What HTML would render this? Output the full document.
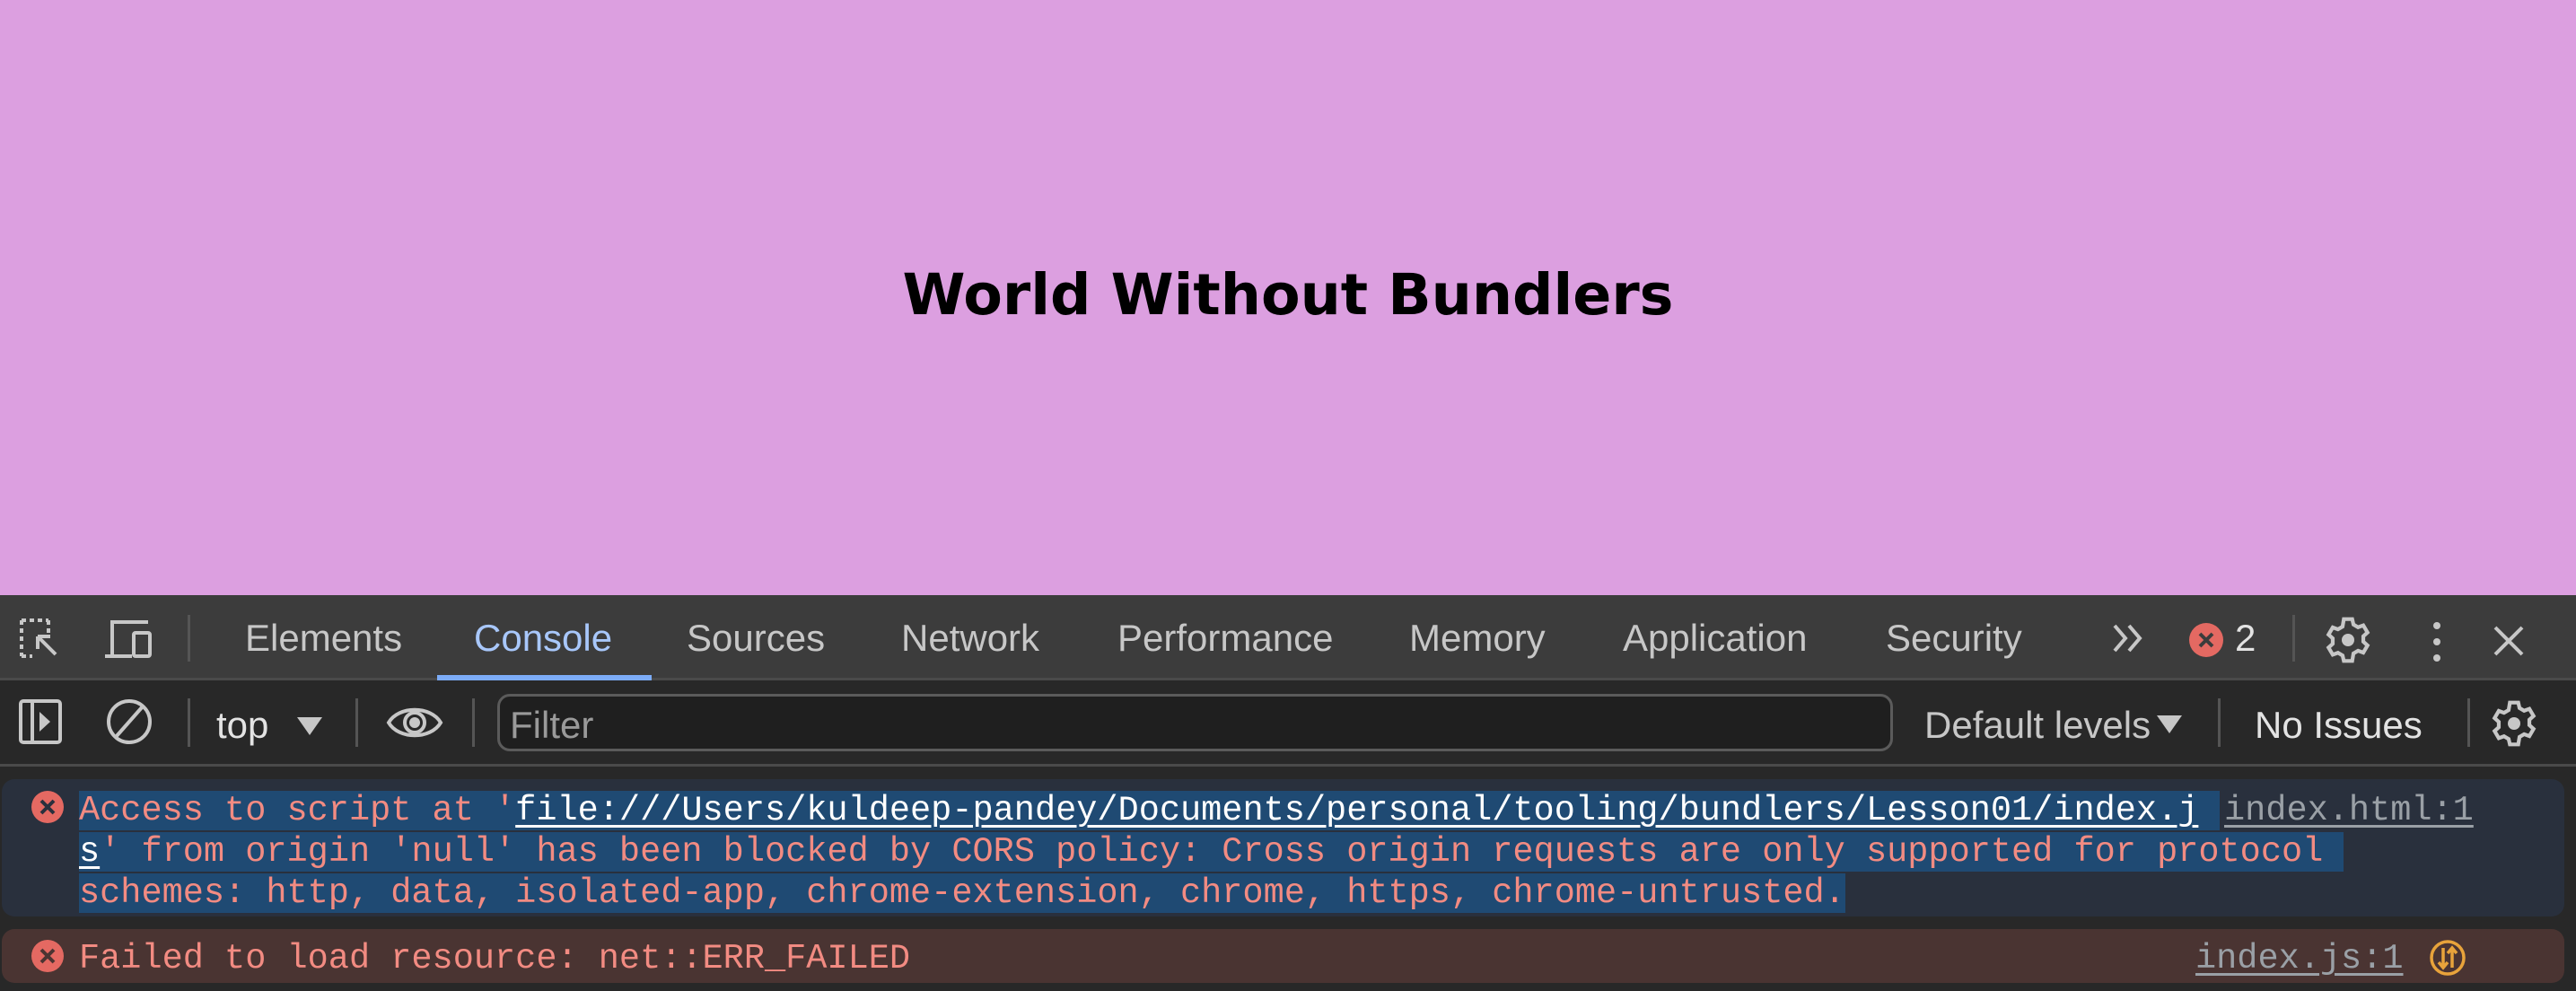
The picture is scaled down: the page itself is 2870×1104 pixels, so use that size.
<!DOCTYPE html>
<html><head><meta charset="utf-8"><style>
*{margin:0;padding:0;box-sizing:border-box}
body{width:2870px;height:1104px;overflow:hidden;background:#282828;font-family:"Liberation Sans",sans-serif;position:relative}
.a{position:absolute}
#page{left:0;top:0;width:2870px;height:663px;background:#dc9fe0}
h1{position:absolute;left:0;width:2870px;top:288px;text-align:center;font-family:"DejaVu Sans",sans-serif;font-weight:bold;font-size:63.5px;line-height:80px;color:#000}
#tabs{left:0;top:663px;width:2870px;height:95px;background:#3c3c3c;border-bottom:3px solid #4a4a4a}
.tab{position:absolute;top:23px;font-size:42px;color:#c7c7c7;line-height:50px}
#tb{left:0;top:758px;width:2870px;height:96px;background:#282828;border-bottom:3px solid #4a4a4a}
.div{position:absolute;width:3px;background:#555}
.mono{font-family:"Liberation Mono",monospace;font-size:38.6px;line-height:46px;white-space:pre}
.sel{background:#1f4a73}
u{text-decoration-thickness:3px;text-underline-offset:6px}
</style></head><body>
<div id="page" class="a"><h1>World Without Bundlers</h1></div>

<div id="tabs" class="a">
<svg class="a" style="left:20px;top:24px" width="52" height="50" viewBox="0 0 52 50" fill="none" stroke="#c7c7c7" stroke-width="4"><path d="M4 4h30M4 4v40M4 44h12M34 4v14" stroke-dasharray="5 4"/><path d="M22 22l20 20M22 22v14M22 22h14"/></svg>
<svg class="a" style="left:115px;top:26px" width="58" height="48" viewBox="0 0 58 48" fill="none" stroke="#c7c7c7" stroke-width="4"><path d="M10 40V4h40M2 42h30"/><rect x="34" y="16" width="18" height="26" rx="2"/></svg>
<div class="div" style="left:209px;top:22px;height:52px"></div>
<div class="tab" style="left:273px">Elements</div>
<div class="tab" style="left:528px;color:#a8c7fa">Console</div>
<div class="a" style="left:487px;top:89px;width:239px;height:6px;background:#7cacf8"></div>
<div class="tab" style="left:765px">Sources</div>
<div class="tab" style="left:1004px">Network</div>
<div class="tab" style="left:1245px">Performance</div>
<div class="tab" style="left:1570px">Memory</div>
<div class="tab" style="left:1808px">Application</div>
<div class="tab" style="left:2101px">Security</div>
<svg class="a" style="left:2352px;top:30px" width="42" height="36" viewBox="0 0 42 36" fill="none" stroke="#c7c7c7" stroke-width="4"><path d="M4 4l12 14-12 14M20 4l12 14-12 14"/></svg>
<svg class="a" style="left:2438px;top:30px" width="40" height="40"><circle cx="20" cy="20" r="19" fill="#e46962"/><path d="M13 13l14 14M27 13l-14 14" stroke="#3c3c3c" stroke-width="4"/></svg>
<div class="tab" style="left:2490px;color:#e3e3e3">2</div>
<div class="div" style="left:2554px;top:22px;height:52px"></div>
<svg class="a" style="left:2588px;top:22px" width="56" height="56" viewBox="0 0 24 24"><path fill="none" stroke="#c7c7c7" stroke-width="1.8" d="M10 2h4l.6 2.6 2.2 1.3 2.5-.9 2 3.4-2 1.8v2.6l2 1.8-2 3.4-2.5-.9-2.2 1.3L14 22h-4l-.6-2.6-2.2-1.3-2.5.9-2-3.4 2-1.8v-2.6l-2-1.8 2-3.4 2.5.9 2.2-1.3z"/><circle cx="12" cy="12" r="3" fill="#c7c7c7"/></svg>
<svg class="a" style="left:2706px;top:28px" width="18" height="48"><circle cx="9" cy="6" r="4" fill="#c7c7c7"/><circle cx="9" cy="24" r="4" fill="#c7c7c7"/><circle cx="9" cy="42" r="4" fill="#c7c7c7"/></svg>
<svg class="a" style="left:2776px;top:32px" width="38" height="38"><path d="M4 4l30 30M34 4L4 34" stroke="#c7c7c7" stroke-width="4"/></svg>
</div>

<div id="tb" class="a">
<svg class="a" style="left:20px;top:20px" width="50" height="52" viewBox="0 0 50 52" fill="none" stroke="#c7c7c7" stroke-width="4"><rect x="3" y="3" width="44" height="46" rx="3"/><path d="M16 3v46"/><path d="M24 15l12 11-12 11z" fill="#c7c7c7" stroke="none"/></svg>
<svg class="a" style="left:117px;top:19px" width="54" height="54" fill="none" stroke="#c7c7c7" stroke-width="4"><circle cx="27" cy="27" r="23"/><path d="M42 10L12 44"/></svg>
<div class="div" style="left:209px;top:20px;height:54px"></div>
<div class="tab" style="left:241px;top:25px;color:#e3e3e3">top</div>
<svg class="a" style="left:330px;top:40px" width="30" height="22"><path d="M1 1h28L15 21z" fill="#c7c7c7"/></svg>
<div class="div" style="left:396px;top:20px;height:54px"></div>
<svg class="a" style="left:430px;top:22px" width="64" height="50" viewBox="0 0 64 50" fill="none" stroke="#c7c7c7" stroke-width="4"><path d="M3 25C14 6 50 6 61 25 50 44 14 44 3 25z"/><circle cx="32" cy="25" r="11"/><circle cx="32" cy="25" r="4" fill="#c7c7c7"/></svg>
<div class="div" style="left:526px;top:20px;height:54px"></div>
<div class="a" style="left:554px;top:15px;width:1555px;height:64px;border:3px solid #5b5b5b;border-radius:14px;background:#1f1f1f"></div>
<div class="tab" style="left:568px;top:25px;color:#9a9a9a">Filter</div>
<div class="tab" style="left:2144px;top:25px">Default levels</div>
<svg class="a" style="left:2402px;top:38px" width="30" height="22"><path d="M1 1h28L15 21z" fill="#c7c7c7"/></svg>
<div class="div" style="left:2471px;top:20px;height:54px"></div>
<div class="tab" style="left:2512px;top:25px;color:#e3e3e3">No Issues</div>
<div class="div" style="left:2749px;top:20px;height:54px"></div>
<svg class="a" style="left:2773px;top:20px" width="56" height="56" viewBox="0 0 24 24"><path fill="none" stroke="#c7c7c7" stroke-width="1.8" d="M10 2h4l.6 2.6 2.2 1.3 2.5-.9 2 3.4-2 1.8v2.6l2 1.8-2 3.4-2.5-.9-2.2 1.3L14 22h-4l-.6-2.6-2.2-1.3-2.5.9-2-3.4 2-1.8v-2.6l-2-1.8 2-3.4 2.5.9 2.2-1.3z"/><circle cx="12" cy="12" r="3" fill="#c7c7c7"/></svg>
</div>

<div class="a" style="left:2px;top:868px;width:2855px;height:153px;background:#29303d;border-radius:14px"></div>
<svg class="a" style="left:34px;top:880px" width="38" height="38"><circle cx="19" cy="19" r="18" fill="#e46962"/><path d="M12 12l14 14M26 12l-14 14" stroke="#29303d" stroke-width="4"/></svg>
<div class="a mono" style="left:88px;top:880px;color:#f28b82"><span class="sel">Access to script at '<u style="color:#fff">file:///Users/kuldeep-pandey/Documents/personal/tooling/bundlers/Lesson01/index.j</u> </span>
<span class="sel"><u style="color:#fff">s</u>' from origin 'null' has been blocked by CORS policy: Cross origin requests are only supported for protocol </span>
<span class="sel">schemes: http, data, isolated-app, chrome-extension, chrome, https, chrome-untrusted.</span></div>
<div class="a mono" style="left:2478px;top:880px;color:#9aa0a6"><u>index.html:1</u></div>

<div class="a" style="left:2px;top:1035px;width:2855px;height:60px;background:#4a3432;border-radius:14px"></div>
<svg class="a" style="left:34px;top:1046px" width="38" height="38"><circle cx="19" cy="19" r="18" fill="#e46962"/><path d="M12 12l14 14M26 12l-14 14" stroke="#4a3432" stroke-width="4"/></svg>
<div class="a mono" style="left:88px;top:1045px;color:#f28b82">Failed to load resource: net::ERR_FAILED</div>
<div class="a mono" style="left:2446px;top:1045px;color:#9aa0a6"><u>index.js:1</u></div>
<svg class="a" style="left:2706px;top:1046px" width="42" height="42" fill="none" stroke="#e8a33b" stroke-width="3.5"><circle cx="21" cy="21" r="18"/><path d="M16 10v22M11 26l5 6 5-6M26 32V10M21 16l5-6 5 6"/></svg>
</body></html>
